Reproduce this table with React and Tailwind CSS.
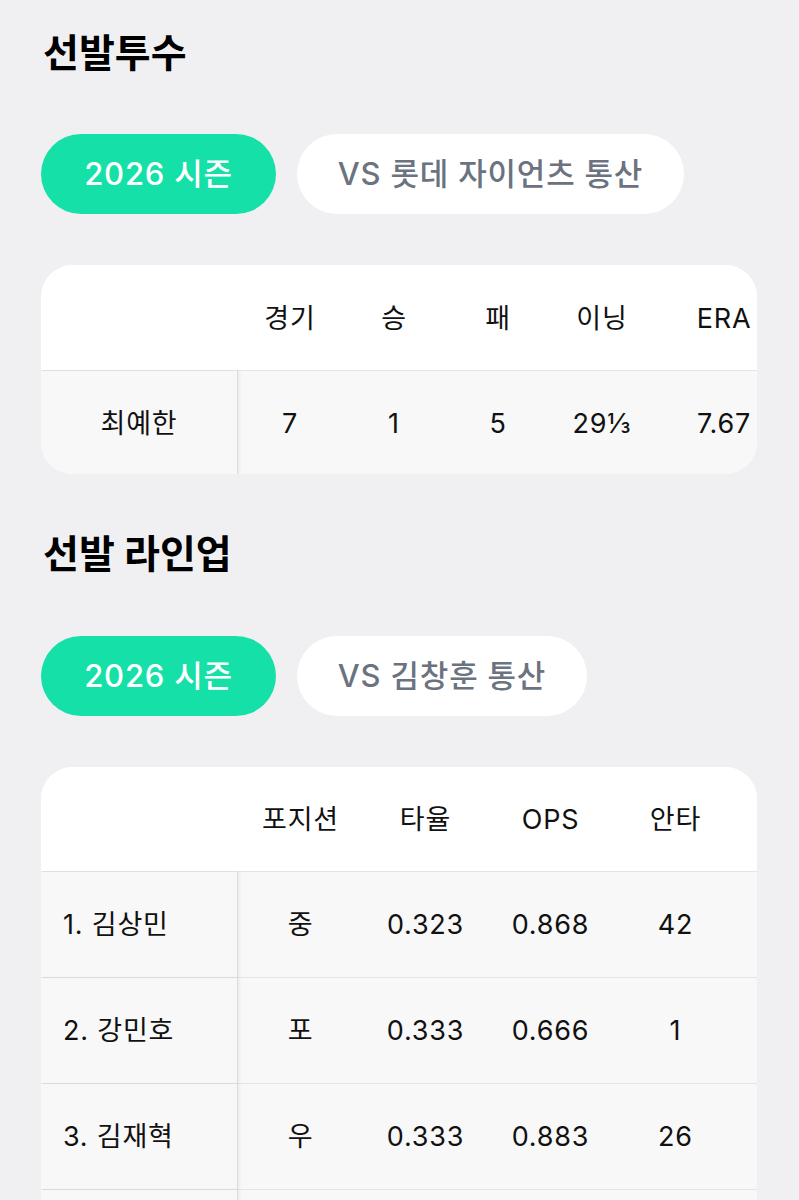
import React from "react";

const FONT = { fontFamily: 'Inter, "Noto Sans CJK KR", "Noto Sans", sans-serif' };

function Pills({ active, other, otherW }) {
  return (
    <div className="flex gap-[21px] h-[80px]">
      <div className="h-[80px] w-[235px] rounded-full bg-[#15e0a8] text-white flex items-center justify-center text-[31px] font-medium tracking-[0.8px]">
        {active}
      </div>
      <div className={otherW + " h-[80px] rounded-full bg-white text-[#6b7280] flex items-center justify-center text-[31px] font-medium tracking-[0.8px]"}>
        {other}
      </div>
    </div>
  );
}

function Heading({ children, className = "" }) {
  return (
    <div className={"h-[48px] flex items-center pl-[2px] text-[39px] font-bold text-black tracking-[0px] " + className}>
      {children}
    </div>
  );
}

function PitcherTable() {
  const cols = ["경기", "승", "패", "이닝", "ERA"];
  const vals = ["7", "1", "5", "29⅓", "7.67"];
  return (
    <div className="mt-[51px] w-[716px] rounded-[32px] bg-white overflow-hidden">
      <div className="flex h-[105px] bg-white text-[27px] tracking-[0.8px] text-[#111]">
        <div className="w-[197px] shrink-0" />
        {cols.map((c, i) => (
          <div
            key={c}
            className={(i === 4 ? "w-[140px]" : "w-[104px]") + " shrink-0 flex items-center justify-center pt-[3px]"}
          >
            {c}
          </div>
        ))}
      </div>
      <div className="flex h-[104px] bg-[#f8f8f8] border-t border-[#e4e4e4] text-[27px] tracking-[0.8px] text-[#111]">
        <div className="w-[197px] shrink-0 flex items-center justify-center pt-[3px] border-r border-[#dcdcdc] shadow-[2px_0_3px_rgba(0,0,0,0.05)]">
          최예한
        </div>
        {vals.map((v, i) => (
          <div
            key={i}
            className={(i === 4 ? "w-[140px]" : "w-[104px]") + " shrink-0 flex items-center justify-center pt-[3px]"}
          >
            {v}
          </div>
        ))}
      </div>
    </div>
  );
}

function LineupTable() {
  const cols = ["포지션", "타율", "OPS", "안타"];
  const rows = [
    ["1. 김상민", "중", "0.323", "0.868", "42"],
    ["2. 강민호", "포", "0.333", "0.666", "1"],
    ["3. 김재혁", "우", "0.333", "0.883", "26"],
    ["", "", "", "", ""],
  ];
  return (
    <div className="mt-[51px] w-[716px] rounded-[32px] bg-white overflow-hidden">
      <div className="flex h-[104px] bg-white text-[27px] tracking-[0.8px] text-[#111]">
        <div className="w-[197px] shrink-0" />
        {cols.map((c) => (
          <div key={c} className="w-[125px] shrink-0 flex items-center justify-center pt-[2px]">
            {c}
          </div>
        ))}
      </div>
      {rows.map((r, ri) => (
        <div
          key={ri}
          className="flex h-[106px] bg-[#f8f8f8] border-t border-[#e4e4e4] text-[27px] tracking-[0.8px] text-[#111]"
        >
          <div className="w-[197px] shrink-0 flex items-center pl-[22px] pt-[2px] border-r border-[#dcdcdc] shadow-[2px_0_3px_rgba(0,0,0,0.05)]">
            {r[0]}
          </div>
          {r.slice(1).map((v, i) => (
            <div key={i} className="w-[125px] shrink-0 flex items-center justify-center pt-[2px]">
              {v}
            </div>
          ))}
        </div>
      ))}
    </div>
  );
}

export default function App() {
  return (
    <div className="min-h-[1200px] w-[799px] bg-[#f0f0f2] pt-[29px] pl-[41px] pb-[40px]" style={FONT}>
      <Heading>선발투수</Heading>
      <div className="mt-[57px]">
        <Pills active="2026 시즌" other="VS 롯데 자이언츠 통산" otherW="w-[387px]" />
      </div>
      <PitcherTable />
      <Heading className="mt-[56px]">선발 라인업</Heading>
      <div className="mt-[58px]">
        <Pills active="2026 시즌" other="VS 김창훈 통산" otherW="w-[290px]" />
      </div>
      <LineupTable />
    </div>
  );
}
